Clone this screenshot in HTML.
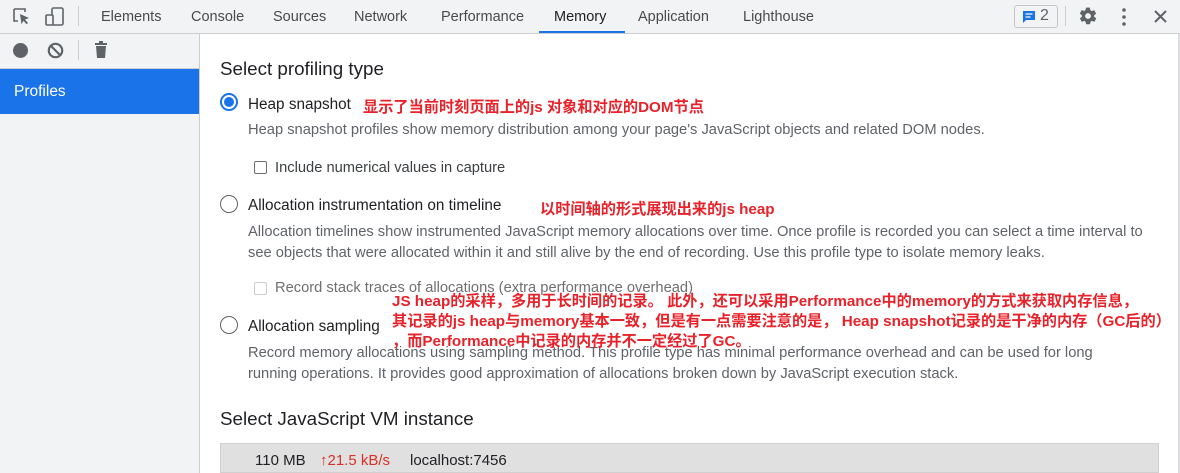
<!DOCTYPE html><html><head><meta charset="utf-8"><style>
body{margin:0;width:1180px;height:473px;overflow:hidden;background:#fff;font-family:"Liberation Sans","Noto Sans CJK SC",sans-serif;color:#202124;position:relative}
.a{position:absolute;white-space:nowrap}
.top{position:absolute;left:0;top:0;width:1180px;height:33px;background:#f1f3f4;border-bottom:1px solid #cbcdd1}
.tab{position:absolute;top:9px;font-size:14.5px;color:#4a4a4a}
.side{position:absolute;left:0;top:34px;width:199px;height:439px;background:#f1f3f4;border-right:1px solid #cbcdd1}
.desc{font-size:14.7px;color:#5f6368;line-height:21px}
.lbl{font-size:15.3px;color:#202124}
.red{color:#e8222a;font-weight:bold;font-size:15.2px}
.radio{position:absolute;width:18px;height:18px;border:1.5px solid #5f6368;border-radius:50%;box-sizing:border-box;background:#fff}
.cb{position:absolute;width:13px;height:13px;border:1px solid #6e6e6e;border-radius:2px;box-sizing:border-box}
</style></head><body>
<div class="top"></div>
<svg class="a" style="left:12px;top:7px" width="20" height="20" viewBox="0 0 20 20"><path d="M2 2h11v3M2 2v12h4" fill="none" stroke="#5f6368" stroke-width="1.6"/><path d="M8 7l9 4-4 1.5 3 3.5-1.5 1.2-3-3.5-2 3.5z" fill="#5f6368"/></svg>
<svg class="a" style="left:44px;top:6px" width="22" height="22" viewBox="0 0 22 22"><rect x="8" y="2" width="11" height="17" rx="1.5" fill="none" stroke="#5f6368" stroke-width="1.6"/><rect x="2" y="9" width="7" height="10" rx="1" fill="#f1f3f4" stroke="#5f6368" stroke-width="1.6"/></svg>
<div class="a" style="left:78px;top:6px;width:1px;height:20px;background:#ccc"></div>
<div class="tab" style="left:101px">Elements</div>
<div class="tab" style="left:191px">Console</div>
<div class="tab" style="left:273px">Sources</div>
<div class="tab" style="left:354px">Network</div>
<div class="tab" style="left:441px">Performance</div>
<div class="tab" style="left:554px;color:#202124">Memory</div>
<div class="a" style="left:539px;top:31px;width:86px;height:2px;background:#1a73e8"></div>
<div class="tab" style="left:638px">Application</div>
<div class="tab" style="left:743px">Lighthouse</div>
<div class="a" style="left:1014px;top:5px;width:44px;height:23px;border:1px solid #c6c6c6;border-radius:3px;box-sizing:border-box"></div>
<svg class="a" style="left:1022px;top:10px" width="14" height="14" viewBox="0 0 14 14"><path d="M1 1h12v9H4l-3 3z" fill="#1a73e8"/><path d="M3.5 4h7M3.5 7h5" stroke="#fff" stroke-width="1.3"/></svg>
<div class="a" style="left:1040px;top:7px;font-size:16px;color:#5f6368">2</div>
<div class="a" style="left:1065px;top:6px;width:1px;height:20px;background:#ccc"></div>
<svg class="a" style="left:1078px;top:6px" width="20" height="20" viewBox="0 0 24 24"><path fill="#5f6368" d="M19.4 13c.04-.3.06-.6.06-1s-.02-.7-.06-1l2.1-1.6c.2-.15.25-.4.12-.6l-2-3.5c-.12-.2-.38-.3-.6-.2l-2.5 1c-.5-.4-1.1-.7-1.700-1l-.4-2.6C14.4 2.200 14.2 2 14 2h-4c-.25 0-.45.2-.5.4l-.4 2.6c-.6.3-1.2.6-1.7 1l-2.5-1c-.2-.1-.5 0-.6.2l-2 3.5c-.12.2-.07.45.12.6L4.6 11c-.04.3-.06.65-.06 1s.02.7.06 1l-2.1 1.6c-.2.15-.25.4-.12.6l2 3.5c.12.2.38.3.6.2l2.5-1c.5.4 1.1.7 1.7 1l.4 2.6c.05.2.25.4.5.4h4c.25 0 .45-.2.5-.4l.4-2.6c.6-.3 1.2-.6 1.7-1l2.5 1c.2.1.5 0 .6-.2l2-3.5c.12-.2.07-.45-.12-.6zM12 15.500A3.5 3.5 0 1 1 12 8.5a3.5 3.5 0 0 1 0 7z"/></svg>
<svg class="a" style="left:1120px;top:7px" width="8" height="20"><circle cx="4" cy="3" r="1.8" fill="#5f6368"/><circle cx="4" cy="10" r="1.8" fill="#5f6368"/><circle cx="4" cy="17" r="1.8" fill="#5f6368"/></svg>
<svg class="a" style="left:1154px;top:10px" width="13" height="13"><path d="M1 1l11 11M12 1L1 12" stroke="#5f6368" stroke-width="2"/></svg>
<div class="a" style="left:1178px;top:34px;width:2px;height:439px;background:#dadce0"></div>
<div class="side"></div>
<div class="a" style="left:0;top:68px;width:199px;height:1px;background:#cbcdd1"></div>
<div class="a" style="left:13px;top:43px;width:15px;height:15px;border-radius:50%;background:#5f6368"></div>
<svg class="a" style="left:47px;top:42px" width="17" height="17"><circle cx="8.5" cy="8.5" r="6.7" fill="none" stroke="#5f6368" stroke-width="2.2"/><path d="M4 4l9 9" stroke="#5f6368" stroke-width="2.2"/></svg>
<div class="a" style="left:78px;top:40px;width:1px;height:20px;background:#ccc"></div>
<svg class="a" style="left:94px;top:41px" width="14" height="18"><rect x="1" y="2" width="12" height="2" fill="#5f6368"/><rect x="5" y="0" width="4" height="2" fill="#5f6368"/><path d="M2 5h10l-1 12H3z" fill="#5f6368"/></svg>
<div class="a" style="left:0;top:69px;width:199px;height:45px;background:#1a73e8"></div>
<div class="a" style="left:14px;top:83px;color:#fff;font-size:15.5px">Profiles</div>

<div class="a" style="left:220px;top:58px;font-size:18.8px">Select profiling type</div>
<div class="radio" style="left:220px;top:93px;border:2px solid #1a73e8"></div>
<div class="a" style="left:224px;top:97px;width:10px;height:10px;border-radius:50%;background:#1a73e8"></div>
<div class="a lbl" style="left:248px;top:96px">Heap snapshot</div>
<div class="a red" style="left:363px;top:95px">显示了当前时刻页面上的js 对象和对应的DOM节点</div>
<div class="a desc" style="left:248px;top:120px">Heap snapshot profiles show memory distribution among your page's JavaScript objects and related DOM nodes.</div>
<div class="cb" style="left:254px;top:161px"></div>
<div class="a desc" style="left:275px;top:158px;color:#3c4043">Include numerical values in capture</div>
<div class="radio" style="left:220px;top:195px"></div>
<div class="a lbl" style="left:248px;top:197px">Allocation instrumentation on timeline</div>
<div class="a red" style="left:540px;top:197px">以时间轴的形式展现出来的js heap</div>
<div class="a desc" style="left:248px;top:222px">Allocation timelines show instrumented JavaScript memory allocations over time. Once profile is recorded you can select a time interval to<br>see objects that were allocated within it and still alive by the end of recording. Use this profile type to isolate memory leaks.</div>
<div class="cb" style="left:254px;top:282px;border-color:#ccc"></div>
<div class="a desc" style="left:275px;top:278px;color:#6f6f6f">Record stack traces of allocations (extra performance overhead)</div>
<div class="radio" style="left:220px;top:316px"></div>
<div class="a lbl" style="left:248px;top:318px">Allocation sampling</div>
<div class="a desc" style="left:248px;top:343px">Record memory allocations using sampling method. This profile type has minimal performance overhead and can be used for long<br>running operations. It provides good approximation of allocations broken down by JavaScript execution stack.</div>
<div class="a red" style="left:392px;top:292px;line-height:20px">JS heap的采样，多用于长时间的记录。 此外，还可以采用Performance中的memory的方式来获取内存信息，<br>其记录的js heap与memory基本一致，但是有一点需要注意的是， Heap snapshot记录的是干净的内存（GC后的）<br>，而Performance中记录的内存并不一定经过了GC。</div>
<div class="a" style="left:220px;top:408px;font-size:18.8px">Select JavaScript VM instance</div>
<div class="a" style="left:220px;top:443px;width:939px;height:30px;background:#e0e0e0;border:1px solid #d0d0d0;box-sizing:border-box"></div>
<div class="a" style="left:255px;top:452px;font-size:15px">110 MB</div>
<div class="a" style="left:320px;top:452px;font-size:15px;color:#d93025">↑21.5 kB/s</div>
<div class="a" style="left:410px;top:452px;font-size:15px">localhost:7456</div>
</body></html>
